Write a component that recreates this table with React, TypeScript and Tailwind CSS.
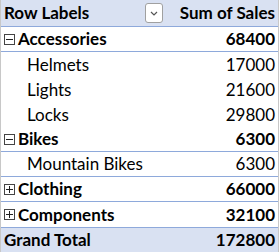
import React from "react";

type Row = { label: string; value: string; kind: "group" | "child"; sign?: "-" | "+"; line?: boolean };

const rows: Row[] = [
  { label: "Accessories", value: "68400", kind: "group", sign: "-", line: true },
  { label: "Helmets", value: "17000", kind: "child" },
  { label: "Lights", value: "21600", kind: "child" },
  { label: "Locks", value: "29800", kind: "child" },
  { label: "Bikes", value: "6300", kind: "group", sign: "-", line: true },
  { label: "Mountain Bikes", value: "6300", kind: "child", line: true },
  { label: "Clothing", value: "66000", kind: "group", sign: "+", line: true },
  { label: "Components", value: "32100", kind: "group", sign: "+" },
];

function Toggle({ sign }: { sign: "-" | "+" }) {
  return (
    <svg width="11" height="11" viewBox="0 0 11 11" className="shrink-0">
      <rect x="0.5" y="0.5" width="10" height="10" fill="white" stroke="#444" strokeWidth="1" />
      <line x1="2" y1="5.5" x2="9" y2="5.5" stroke="#222" strokeWidth="1" />
      {sign === "+" && <line x1="5.5" y1="2" x2="5.5" y2="9" stroke="#222" strokeWidth="1" />}
    </svg>
  );
}

export default function App() {
  return (
    <div
      className="w-[279px] h-[252px] bg-white border-x border-[#c8c8c8] text-black overflow-hidden"
      style={{ fontFamily: "Lato, 'Open Sans', sans-serif" }}
    >
      <div className="h-[27px] bg-[#d9e1f2] border-b border-[#8ea9db] flex items-center text-[17px] font-bold">
        <div className="w-[144px] pl-[3px]">Row Labels</div>
        <div className="w-[18px] h-[20px] bg-white border border-[#a0a0a0] rounded-[3px] flex items-center justify-center">
          <svg width="8" height="5" viewBox="0 0 8 5">
            <polyline points="1,1 4,4 7,1" fill="none" stroke="#555" strokeWidth="1.2" />
          </svg>
        </div>
        <div className="flex-1 text-right pr-[3px]">Sum of Sales</div>
      </div>
      {rows.map((r) => (
        <div
          key={r.label}
          className={`h-[25px] flex items-center text-[17px] ${r.line ? "border-b border-[#8ea9db]" : ""} ${
            r.kind === "group" ? "font-bold" : ""
          }`}
        >
          <div className={`flex-1 flex items-center ${r.kind === "group" ? "pl-[3px] gap-[3px]" : "pl-[26px]"}`}>
            {r.sign && <Toggle sign={r.sign} />}
            <span>{r.label}</span>
          </div>
          <div className="pr-[3px]">{r.value}</div>
        </div>
      ))}
      <div className="h-[25px] bg-[#d9e1f2] border-t border-[#8ea9db] flex items-center text-[17px] font-bold">
        <div className="flex-1 pl-[3px]">Grand Total</div>
        <div className="pr-[3px]">172800</div>
      </div>
    </div>
  );
}
